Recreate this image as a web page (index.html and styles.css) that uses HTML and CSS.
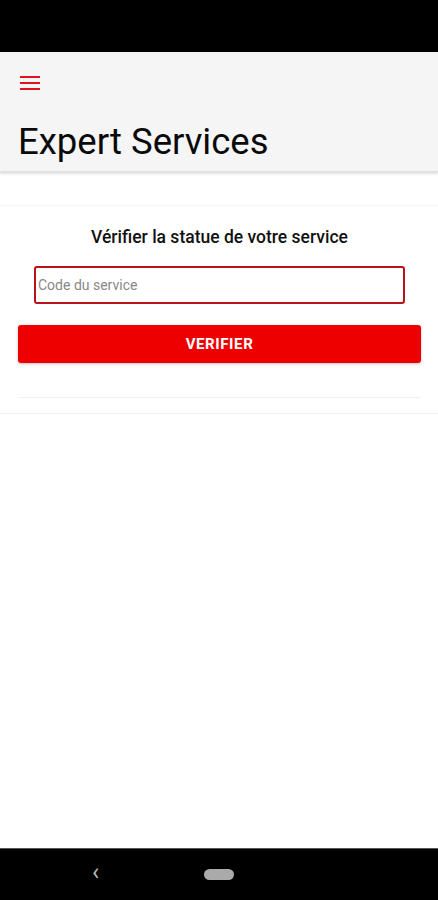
FILE: index.html
```html
<!DOCTYPE html>
<html lang="fr">
<head>
    <meta charset="UTF-8">
    <meta name="viewport" content="width=device-width, initial-scale=1.0">
    <title>Expert Services</title>
    <link rel="stylesheet" href="styles.css">
</head>
<body>
    <div class="status-bar"></div>

    <header class="app-header">
        <button class="menu-btn" aria-label="Menu">
            <svg width="20" height="14" viewBox="0 0 20 14">
                <rect x="0" y="0" width="20" height="2" fill="#e0141e"/>
                <rect x="0" y="6" width="20" height="2" fill="#e0141e"/>
                <rect x="0" y="12" width="20" height="2" fill="#e0141e"/>
            </svg>
        </button>
        <h1>Expert Services</h1>
    </header>

    <main class="content">
        <section class="check-card">
            <h2>Vérifier la statue de votre service</h2>
            <input type="text" class="code-input" placeholder="Code du service">
            <button class="verify-btn">VERIFIER</button>
            <div class="card-divider"></div>
        </section>
    </main>

    <nav class="nav-bar">
        <span class="nav-back">&#8249;</span>
        <span class="nav-home"></span>
    </nav>
</body>
</html>
```

FILE: styles.css
```css
body {
    margin: 0;
    font-family: Roboto, "Liberation Sans", sans-serif;
    background: #fff;
    height: 900px;
    display: flex;
    flex-direction: column;
}

.status-bar {
    height: 52px;
    background: #000;
}

.app-header {
    background: #f5f5f5;
    height: 120px;
    padding: 0 18px;
    box-sizing: border-box;
    border-bottom: 1px solid #e2e2e2;
    box-shadow: 0 2px 2px rgba(0, 0, 0, 0.12);
}

.menu-btn {
    display: block;
    background: none;
    border: none;
    padding: 0;
    margin: 24px 0 0 2px;
    line-height: 0;
}

.app-header h1 {
    margin: 34px 0 0;
    font-size: 36.5px;
    font-weight: 400;
    color: #0a0a0a;
    line-height: 1;
}

.content {
    flex: 1;
    padding-top: 33px;
}

.check-card {
    border-top: 1px solid #f6f6f6;
    border-bottom: 1px solid #f1f1f1;
    padding: 20px 17px 15px 18px;
    display: flex;
    flex-direction: column;
    align-items: center;
}

.check-card h2 {
    margin: 0;
    font-size: 17.5px;
    font-weight: 500;
    color: #111;
    line-height: 22px;
}

.code-input {
    margin-top: 18px;
    width: 371px;
    height: 38px;
    box-sizing: border-box;
    border: 2px solid #b8121a;
    border-radius: 3px;
    padding: 0 2px;
    font-family: Roboto, "Liberation Sans", sans-serif;
    font-size: 14px;
    color: #333;
    outline: none;
}

.code-input::placeholder {
    color: #888;
}

.verify-btn {
    margin-top: 21px;
    width: 100%;
    height: 38px;
    background: #ee0000;
    color: #fff;
    border: none;
    border-radius: 3px;
    font-family: Roboto, "Liberation Sans", sans-serif;
    font-size: 15px;
    font-weight: 700;
    letter-spacing: 0.6px;
    box-shadow: 0 1px 3px rgba(0, 0, 0, 0.25);
}

.card-divider {
    margin-top: 34px;
    width: 100%;
    height: 1px;
    background: #f1f1f1;
}

.nav-bar {
    height: 51px;
    background: #000;
    border-top: 1px solid #555;
    display: flex;
    align-items: center;
    justify-content: center;
    position: relative;
}

.nav-back {
    position: absolute;
    left: 92px;
    top: 9px;
    color: #bbb;
    font-size: 24px;
}

.nav-home {
    width: 30px;
    height: 11px;
    border-radius: 6px;
    background: #aaa;
}
```
